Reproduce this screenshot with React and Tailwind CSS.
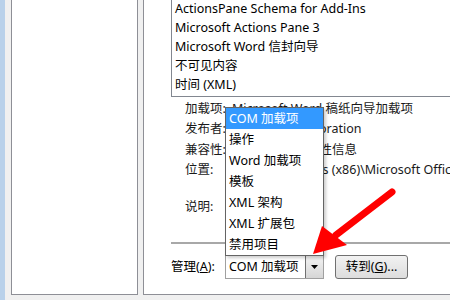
export default function App() {
  const items = [
    "ActionsPane Schema for Add-Ins",
    "Microsoft Actions Pane 3",
    "Microsoft Word 信封向导",
    "不可见内容",
    "时间 (XML)",
  ];

  const options = ["COM 加载项", "操作", "Word 加载项", "模板", "XML 架构", "XML 扩展包", "禁用项目"];

  return (
    <div className="relative w-[450px] h-[300px] overflow-hidden flex bg-[#f0f0f0] text-[12.5px] text-black font-['Noto_Sans','Noto_Sans_CJK_SC',sans-serif]">
      <div className="w-[5px] shrink-0 bg-[#b9d1ea]" />
      <div className="flex gap-[5px] pl-[6px] pb-[5px] h-[300px]">
        {/* left panel */}
        <div className="w-[127px] h-[295px] shrink-0 bg-white border-x border-b border-[#8e8f96]" />

        {/* right panel */}
        <div className="w-[320px] h-[295px] shrink-0 bg-white border-l border-b border-[#8e8f96] pl-[27px]">
          <div className="mt-[-1px] h-[98px] border-l border-b border-[#828790] pl-[3px] pb-[2px]">
            {items.map((t) => (
              <div key={t} className="h-[19px] leading-[19px] whitespace-nowrap">{t}</div>
            ))}
          </div>

          <div className="mt-[2px] pl-[14px] text-[#1a1a1a]">
            <div className="flex h-[20px] items-center whitespace-nowrap">
              <span className="w-[47px] shrink-0">加载项:</span>
              <span>Microsoft Word 稿纸向导加载项</span>
            </div>
            <div className="flex h-[21px] items-center whitespace-nowrap">
              <span className="w-[47px] shrink-0">发布者:</span>
              <span>Microsoft Corporation</span>
            </div>
            <div className="flex h-[20px] items-center whitespace-nowrap">
              <span className="w-[47px] shrink-0">兼容性:</span>
              <span>没有可用的兼容性信息</span>
            </div>
            <div className="flex h-[20px] items-center whitespace-nowrap">
              <span className="w-[47px] shrink-0">位置:</span>
              <span>C:\Program Files (x86)\Microsoft Office\Office14</span>
            </div>
            <div className="flex h-[20px] items-center mt-[17px] whitespace-nowrap">
              <span className="w-[47px] shrink-0">说明:</span>
              <span></span>
            </div>
          </div>

          <div className="mt-[25px] h-[2px] bg-[#a8a8a8]" />

          <div className="mt-[11px] flex items-center">
            <span className="w-[54px] shrink-0 whitespace-nowrap">
              管理(<span className="underline">A</span>):
            </span>
            <div className="relative flex h-[24px] w-[99px] shrink-0 border border-[#a0a0a0] bg-white">
              <span className="flex-1 pl-[3px] leading-[22px] whitespace-nowrap">COM 加载项</span>
              <div className="w-[18px] h-[22px] border-l border-[#707070] bg-gradient-to-b from-[#f3f3f3] to-[#d6d6d6] flex items-center justify-center">
                <svg width="7" height="4" viewBox="0 0 7 4">
                  <path d="M0 0h7L3.5 4z" fill="#000" />
                </svg>
              </div>

              {/* open dropdown list */}
              <div className="absolute left-[-1px] bottom-[22px] w-[99px] bg-white border border-[#646464] shadow-[2px_2px_3px_rgba(0,0,0,0.2)]">
                {options.map((o, i) => (
                  <div
                    key={o}
                    className={`h-[21px] leading-[21px] pl-[3px] whitespace-nowrap ${i === 0 ? "bg-[#3399ff] text-white" : ""}`}
                  >
                    {o}
                  </div>
                ))}
              </div>
            </div>
            <button className="ml-[11px] h-[24px] w-[73px] shrink-0 rounded-[3px] border border-[#707070] bg-gradient-to-b from-[#f2f2f2] to-[#dddddd] whitespace-nowrap">
              转到(<span className="underline">G</span>)...
            </button>
          </div>
        </div>
      </div>

      {/* red annotation arrow */}
      <svg className="absolute left-0 top-0 pointer-events-none" width="450" height="300" viewBox="0 0 450 300">
        <line x1="392" y1="192" x2="336" y2="235" stroke="#ff0000" strokeWidth="7" strokeLinecap="round" />
        <polygon points="313,254 322,226 347,245" fill="#ff0000" />
      </svg>
    </div>
  );
}
